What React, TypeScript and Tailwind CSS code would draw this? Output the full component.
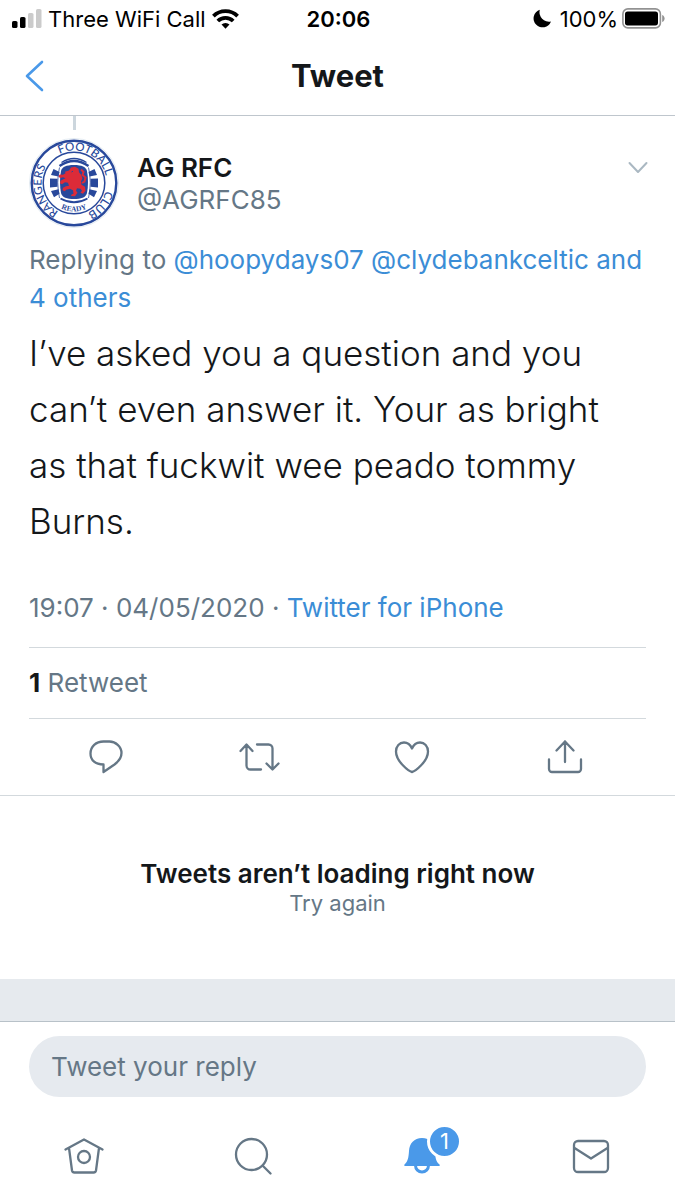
import type { ReactNode } from 'react';

function Signal() {
  return (
    <svg viewBox="0 0 30 19" className="h-[19px] w-[30px]" aria-hidden="true">
      <rect x="0" y="12" width="5.5" height="7" rx="1.6" />
      <rect x="8" y="8" width="5.5" height="11" rx="1.6" />
      <rect x="16" y="4" width="5.5" height="15" rx="1.6" fill="#cbcbcb" />
      <rect x="24" y="0" width="5.5" height="19" rx="1.6" fill="#cbcbcb" />
    </svg>
  );
}

function Wifi() {
  return (
    <svg viewBox="0 0 27 20" className="h-5 w-[27px]" fill="none" stroke="#000" strokeWidth="3.8" aria-hidden="true">
      <path d="M1.4 7.2a17.2 17.2 0 0 1 24.2 0" />
      <path d="M5.8 12a10.9 10.9 0 0 1 15.4 0" />
      <path d="M13.5 19.8l-4-4.2a5.6 5.6 0 0 1 8 0z" fill="#000" stroke="none" />
    </svg>
  );
}

function Battery() {
  return (
    <svg viewBox="0 0 43 21" className="h-[21px] w-[43px]" aria-hidden="true">
      <rect x="0.9" y="0.9" width="37.5" height="19" rx="5" fill="none" stroke="#929292" strokeWidth="1.6" />
      <rect x="3" y="3.4" width="33" height="14" rx="2.6" />
      <path d="M40.2 7v7c1.6-.6 2.4-2 2.4-3.5S41.8 7.6 40.2 7z" fill="#929292" />
    </svg>
  );
}

function Crest() {
  return (
    <svg viewBox="0 0 90 90" className="size-[90px] shrink-0" role="img" aria-label="Rangers Football Club crest">
      <defs>
        <path id="crest-ring" d="M45 77.500A32.500 32.500 0 0 1 45 12.500A32.500 32.500 0 0 1 45 77.500" />
        <path id="crest-motto" d="M16.500 45A28.500 28.500 0 0 0 73.500 45" />
      </defs>
      <circle cx="45" cy="45" r="44.5" fill="#fff" stroke="#e3ebf2" strokeWidth="1" />
      <circle cx="45" cy="45" r="42.3" fill="none" stroke="#28489b" strokeWidth="2.4" />
      <circle cx="45" cy="45" r="30.8" fill="none" stroke="#28489b" strokeWidth="1.5" />
      <g fill="#28489b" fontFamily="Lato, 'Liberation Sans', sans-serif" fontSize="11.5" fontWeight="500" textAnchor="middle">
        <text>
          <textPath href="#crest-ring" startOffset="20.7%">RANGERS</textPath>
        </text>
        <text>
          <textPath href="#crest-ring" startOffset="57%">FOOTBALL</textPath>
        </text>
        <text>
          <textPath href="#crest-ring" startOffset="86%">CLUB</textPath>
        </text>
        <text fontSize="7.5" fontFamily="'Liberation Serif', serif" fontWeight="700">
          <textPath href="#crest-motto" startOffset="50%">READY</textPath>
        </text>
      </g>
      <path d="M45 27C53 27 57 29 58 33Q60 44 58 55C57 59.500 52 61 45 61S33 59.500 32 55Q30 44 32 33C33 29 37 27 45 27z" fill="#28489b" />
      <g fill="none" stroke="#28489b">
        <path d="M32.500 24.500Q45 16.500 57.500 24.500" strokeWidth="1.3" />
        <path d="M30.500 28Q45 18 59.500 28" strokeWidth="2.4" />
        <path d="M31.500 60.500Q45 68 58.500 60.500" strokeWidth="1.8" />
        <path d="M30.500 29.500Q27 44 30.500 60M59.500 29.500Q63 44 59.500 60" strokeWidth="0.8" />
      </g>
      <g fill="#28489b">
        <path d="M24.500 31l6 3-1 4.500-7.500-1.500zM21 40.500l7.500.3v8L21 49.500zM22 53l7.500-1.800 1 4.600-5.500 3.500z" />
        <path d="M65.500 31l-6 3 1 4.500 7.500-1.500zM69 40.500l-7.500.3v8l7.500.7zM68 53l-7.500-1.800-1 4.600 5.500 3.500z" />
      </g>
      <path
        fill="#dc2b38"
        d="M40 32.500l2-3 4-.8 3.500 2 .5 3.500 2 2.500 1.500 3.500-1.500 3 .5 3.500 3.500 2 .5 4-2.500 3-2.500-1 1.500-2-1.500-2-3.500-.5-1 2.500 1.500 2-2.500 3.500-4-.3.5-1.500 2-.7-.5-3.500-3-1.500-4 1-1 1.500-2.500-1 .5-2.500 3-1.500 3-.5-1-3-3-.5-3 2-2-1 .5-2.500 5-2.500-2.500-1-3 .8-1.500-1.500 1-2 3.500.2 2.500-1.500-.5-1.500z"
      />
      <path d="M52 31.500l2.500 2.500-1 3 3 2.500-1 4-2.500 1.500" fill="none" stroke="#dc2b38" strokeWidth="2" />
      <path d="M42.500 34l1.500-.8" stroke="#28489b" strokeWidth="1" />
    </svg>
  );
}

function Icon({ box, className, width = 2.3, children }: { box: string; className: string; width?: number; children: ReactNode }) {
  return (
    <svg viewBox={box} className={className} fill="none" stroke="currentColor" strokeWidth={width} strokeLinecap="round" strokeLinejoin="round" aria-hidden="true">
      {children}
    </svg>
  );
}

export default function App() {
  return (
    <div className="flex min-h-screen flex-col bg-white font-['Inter','Liberation_Sans',sans-serif] text-[#14171a]">
      <div className="grid h-[37px] grid-cols-[1fr_auto_1fr] items-center pr-2.5 pl-3 text-[22px] leading-7 text-black">
        <div className="flex items-center gap-1.5">
          <Signal />
          <span className="whitespace-nowrap">Three WiFi Call</span>
          <Wifi />
        </div>
        <time className="font-semibold">20:06</time>
        <div className="flex items-center justify-end gap-1">
          <svg viewBox="0 0 19 19" className="mr-1 size-[19px]" aria-hidden="true">
            <path d="M6.8.8A9 9 0 1 0 18 12.500 9.500 9.500 0 0 1 6.8.8z" />
          </svg>
          <span>100%</span>
          <Battery />
        </div>
      </div>

      <header className="grid h-[79px] grid-cols-[1fr_auto_1fr] items-center border-b border-[#bfc6cd] px-6">
        <button type="button" aria-label="Back" className="w-6 text-[#4a99e9]">
          <Icon box="0 0 20 32" className="h-8 w-5" width={2.6}>
            <path d="M18 2L3 16l15 14" />
          </Icon>
        </button>
        <h1 className="text-[31px] leading-10 font-bold">Tweet</h1>
      </header>

      <main className="flex-1">
        <article>
          <div className="px-[29px]">
            <div className="ml-11 h-3.5 w-[3px] bg-[#ccd6dd]" />
            <div className="mt-2 flex items-start">
              <Crest />
              <div className="ml-[18px] flex-1 pt-3.5 text-[26px] leading-8">
                <h2 className="font-semibold">AG RFC</h2>
                <p className="text-[#657786]">@AGRFC85</p>
              </div>
              <button type="button" aria-label="More options" className="mt-[22px] -mr-0.5 text-[#aab8c2]">
                <Icon box="0 0 20 16" className="h-4 w-5" width={2}>
                  <path d="M1.500 3l8.500 9 8.500-9" />
                </Icon>
              </button>
            </div>
            <p className="mt-[13px] text-[26px] leading-[38px] text-[#657786]">
              Replying to{' '}
              <a href="#replying" className="text-[#3b8dd6]">
                @hoopydays07 @clydebankceltic and 4 others
              </a>
            </p>
            <p className="mt-2 text-[35px] leading-[56px] font-light">
              I’ve asked you a question and you can’t even answer it. Your as bright as that fuckwit wee peado tommy Burns.
            </p>
            <p className="mt-10 pb-5 text-[26px] leading-[38px] text-[#657786]">
              19:07 · 04/05/2020 ·{' '}
              <a href="#source" className="text-[#3b8dd6]">
                Twitter for iPhone
              </a>
            </p>
            <p className="border-y border-[#d3d9dd] py-4 text-[26px] leading-[38px] text-[#657786]">
              <strong className="font-bold text-[#14171a]">1</strong> Retweet
            </p>
          </div>
          <div className="grid h-[77px] grid-cols-4 place-items-center border-b border-[#d3d9dd] pr-[33px] pl-[29px] text-[#657786]">
            <button type="button" aria-label="Reply">
              <Icon box="0 0 36 36" className="size-9">
                <path d="M15.500 2.500h6C27.500 2.500 33.500 7.500 33.500 14c0 5-3 8.500-7 11.500L15.500 33v-7.500C7 25.500 2.500 21 2.500 14.500 2.500 7.500 8 2.500 15.500 2.500z" />
              </Icon>
            </button>
            <button type="button" aria-label="Retweet">
              <Icon box="0 0 42 36" className="h-9 w-[42px]">
                <path d="M2.500 12l6-6.500 6 6.500M8.500 6v20.500a4 4 0 0 0 4 4H23M19 5.500h11.500a4 4 0 0 1 4 4V30M28.500 24.500l6 6 6-6" />
              </Icon>
            </button>
            <button type="button" aria-label="Like">
              <Icon box="0 0 36 36" className="size-9">
                <path d="M18 33C15 32.500 2 22.500 2 12.500 2 7 5.500 3.500 10 3.500c3.500 0 6.500 2.500 8 6 1.500-3.500 4.500-6 8-6 4.500 0 8 3.500 8 9C34 22.500 21 32.500 18 33z" />
              </Icon>
            </button>
            <button type="button" aria-label="Share">
              <Icon box="0 0 36 36" className="size-9">
                <path d="M18 23V2.500M9.500 11.500L18 2.500l8.500 9M2 20.500V30a3 3 0 0 0 3 3h26a3 3 0 0 0 3-3v-9.500" />
              </Icon>
            </button>
          </div>
        </article>
        <section className="flex h-[183px] flex-col items-center justify-center">
          <p className="text-[26px] leading-[30px] font-semibold">Tweets aren’t loading right now</p>
          <button type="button" className="text-[22px] leading-7 text-[#657786]">
            Try again
          </button>
        </section>
        <div className="h-[43px] border-b border-[#b8c1c8] bg-[#e6eaee]" />
      </main>

      <footer>
        <div className="px-[29px] pt-3.5">
          <input
            type="text"
            aria-label="Tweet your reply"
            placeholder="Tweet your reply"
            className="h-[61px] w-full rounded-full bg-[#e6eaef] px-[22px] text-[26px] outline-none placeholder:text-[#657786]"
          />
        </div>
        <nav className="grid h-[103px] grid-cols-4 place-items-center text-[#657786]">
          <a href="#home" aria-label="Home" className="mt-3.5">
            <Icon box="0 0 40 38" className="h-[38px] w-10">
              <path d="M1.500 12.500L20 2.500l18.500 10M5 11l3 22.500a2.500 2.500 0 0 0 2.500 2h19a2.500 2.500 0 0 0 2.500-2L35 11" />
              <circle cx="20" cy="20" r="6" />
            </Icon>
          </a>
          <a href="#search" aria-label="Search" className="mt-3.5">
            <Icon box="0 0 38 38" className="size-[38px]">
              <circle cx="17.500" cy="17.500" r="15.500" />
              <path d="M28.500 28.500l8 8" />
            </Icon>
          </a>
          <a href="#notifications" aria-label="Notifications, 1 new" className="relative mt-3.5 text-[#4a99e9]">
            <svg viewBox="0 0 36 38" className="h-[38px] w-9" aria-hidden="true">
              <path fill="currentColor" d="M18 1C10 1 5.500 6.500 5 14 4.500 21 4 24 .5 27.500c-.8 1 0 1.500.5 1.500h34c.8 0 1.200-.8.500-1.500C31.500 24 31.500 21 31 14 30.500 6.500 26 1 18 1z" />
              <path fill="none" stroke="currentColor" strokeWidth="3" d="M11.500 28.500a6.500 6.500 0 0 0 13 0" />
            </svg>
            <span className="absolute -top-[13px] left-[23px] flex size-[35px] items-center justify-center rounded-full border-3 border-white bg-[#4a99e9] text-[22px] leading-6 text-white">1</span>
          </a>
          <a href="#messages" aria-label="Messages" className="mt-3.5">
            <Icon box="0 0 38 38" className="size-[38px]">
              <rect x="2" y="4" width="34" height="31" rx="4" />
              <path d="M2.500 11L19 21.500 35.500 11" />
            </Icon>
          </a>
        </nav>
      </footer>
    </div>
  );
}
